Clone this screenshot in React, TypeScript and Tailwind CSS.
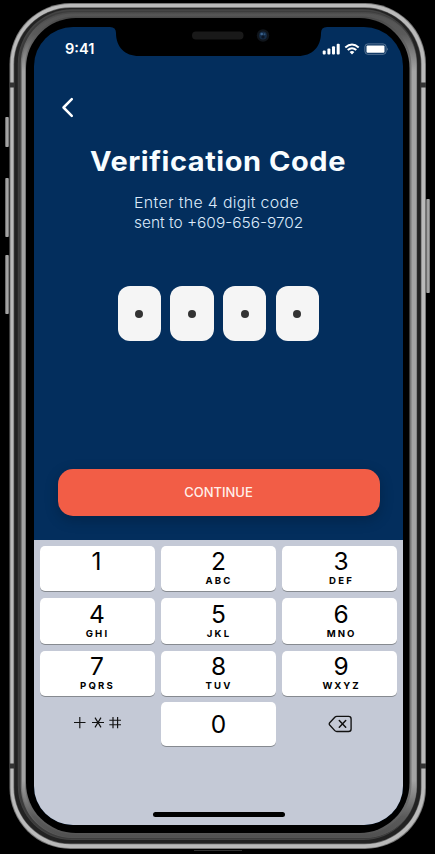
import React from "react";

const KEYS: { digit: string; letters: string; nudge: string; spacing: string }[][] = [
  [
    { digit: "1", letters: "", nudge: "pr-[2px]", spacing: "" },
    { digit: "2", letters: "ABC", nudge: "", spacing: "tracking-[2.2px]" },
    { digit: "3", letters: "DEF", nudge: "pl-[3px]", spacing: "tracking-[2.2px]" },
  ],
  [
    { digit: "4", letters: "GHI", nudge: "pr-[1px]", spacing: "tracking-[2.2px]" },
    { digit: "5", letters: "JKL", nudge: "", spacing: "tracking-[2.2px]" },
    { digit: "6", letters: "MNO", nudge: "pl-[3px]", spacing: "tracking-[1.9px]" },
  ],
  [
    { digit: "7", letters: "PQRS", nudge: "pr-[1px]", spacing: "tracking-[2.2px]" },
    { digit: "8", letters: "TUV", nudge: "", spacing: "tracking-[2.2px]" },
    { digit: "9", letters: "WXYZ", nudge: "pl-[3px]", spacing: "tracking-[1.9px]" },
  ],
];

/* Metal body of the phone with its side buttons and antenna bands. */
function DeviceBody() {
  return (
    <svg className="absolute inset-0" width="435" height="854" viewBox="0 0 435 854" aria-hidden="true">
      <defs>
        <linearGradient id="side" x1="0" x2="1" y1="0" y2="0">
          <stop offset="0" stopColor="#555" />
          <stop offset="0.5" stopColor="#bbb" />
          <stop offset="1" stopColor="#666" />
        </linearGradient>
        <linearGradient id="inner" x1="0" x2="0" y1="0" y2="1">
          <stop offset="0" stopColor="#545454" />
          <stop offset="0.025" stopColor="#5a5a5a" />
          <stop offset="0.07" stopColor="#a4a4a4" />
          <stop offset="0.93" stopColor="#a4a4a4" />
          <stop offset="0.975" stopColor="#5a5a5a" />
          <stop offset="1" stopColor="#505050" />
        </linearGradient>
        <linearGradient id="lip" x1="0" x2="0" y1="0" y2="1">
          <stop offset="0" stopColor="#484848" />
          <stop offset="0.06" stopColor="#777" />
          <stop offset="0.94" stopColor="#777" />
          <stop offset="1" stopColor="#555" />
        </linearGradient>
      </defs>
      <rect x="5" y="117" width="4" height="30" rx="1" fill="url(#side)" />
      <rect x="5" y="178" width="4" height="59" rx="1" fill="url(#side)" />
      <rect x="5" y="255" width="4" height="59" rx="1" fill="url(#side)" />
      <rect x="426" y="199" width="4" height="94" rx="1" fill="url(#side)" />
      <rect x="194" y="850" width="48" height="1" fill="#333" />
      <rect x="9.5" y="3" width="416.5" height="846" rx="61" fill="#777" />
      <rect x="10.5" y="4" width="414.5" height="844" rx="60" fill="#bababa" />
      <rect x="13.5" y="7.3" width="408" height="837" rx="57" fill="#666" />
      <rect x="14.2" y="8.1" width="406.6" height="835.4" rx="56" fill="#222" />
      <rect x="17.8" y="9.3" width="399.4" height="830.7" rx="54" fill="#444" />
      <rect x="18.6" y="11" width="398.4" height="828" rx="53" fill="#3c3c3c" />
      <rect x="20.8" y="12" width="396" height="826" rx="52" fill="url(#lip)" />
      <rect x="22" y="13.5" width="394.5" height="824" rx="51" fill="url(#inner)" />
      <rect x="25" y="16.5" width="386.5" height="818" rx="50" fill="url(#lip)" />
      <rect x="26" y="18" width="383.5" height="815" rx="50" fill="#000" />
      <rect x="9.5" y="82.5" width="4.5" height="5" fill="#333" />
      <rect x="421" y="82.5" width="5" height="5" fill="#333" />
      <rect x="9.5" y="763.5" width="4.5" height="5" fill="#333" />
      <rect x="421" y="763.5" width="5" height="5" fill="#333" />
    </svg>
  );
}

function Notch() {
  return (
    <svg className="absolute left-[110px] top-[26px]" width="217" height="31" viewBox="110 26 217 31" aria-hidden="true">
      <path d="M110 26V27Q116 27 116 33C116 47 125 56 139 56H298C312 56 321 47 321 33Q321 27 327 27V26Z" fill="#000" />
      <rect x="192" y="31.5" width="51.5" height="8" rx="4" fill="#191919" />
      <circle cx="263" cy="35.5" r="6.2" fill="#10151b" />
      <circle cx="263" cy="35.5" r="3.9" fill="#152b46" />
      <circle cx="261.7" cy="34" r="1.3" fill="#3b638d" />
      <circle cx="264.5" cy="34.2" r="1" fill="#2d5279" />
      <circle cx="263" cy="37" r="1.6" fill="#0a1524" />
    </svg>
  );
}

function StatusIcons() {
  return (
    <svg width="67" height="12" viewBox="322 42.5 67 12" aria-hidden="true">
      <g fill="#fff">
        <rect x="322.7" y="50" width="3" height="4" rx="1" />
        <rect x="327.4" y="48" width="3" height="6" rx="1" />
        <rect x="332" y="45.7" width="3" height="8.3" rx="1" />
        <rect x="336.7" y="43.2" width="3" height="10.8" rx="1" />
        <path d="M352 51L349.6 51.6L352 54L354.4 51.6Q352 49.4 349.6 51.6Z" />
        <rect x="366.5" y="45" width="18" height="7.2" rx="1" />
      </g>
      <path d="M345.3 46.9Q352 41 358.7 46.9M347.7 49.6Q352 45.9 356.3 49.6" fill="none" stroke="#fff" strokeWidth="2" />
      <rect x="364.9" y="43.4" width="21.2" height="10.4" rx="3" fill="none" stroke="#6f88a3" strokeWidth="0.8" />
      <path d="M387.2 46.9Q388.6 48.5 387.2 50.2Z" fill="#8197ae" />
    </svg>
  );
}

function SymbolsIcon() {
  return (
    <svg width="49" height="15" viewBox="73 715 49 15" fill="none" stroke="#111" strokeWidth="1.15" aria-hidden="true">
      <path d="M74 722.5H85.5M79.8 717V728.2" />
      <path d="M92 722.5H104M95 717.6L101 727.4M101 717.6L95 727.4" />
      <path d="M109.3 720.2H121M109.3 724.7H121M113 717V728.2M117.6 717V728.2" />
    </svg>
  );
}

function DeleteIcon() {
  return (
    <svg width="24" height="18" viewBox="328 715 24 18" fill="none" stroke="#111" strokeWidth="1.35" strokeLinejoin="round" strokeLinecap="round" aria-hidden="true">
      <path d="M336.8 716.4H348.6Q351.1 716.4 351.1 718.9V729Q351.1 731.5 348.6 731.5H336.8Q335.6 731.5 334.8 730.6L329.7 725Q328.8 723.9 329.7 722.8L334.8 717.2Q335.6 716.4 336.8 716.4Z" />
      <path d="M339.3 720.6L345.7 727.2M345.7 720.6L339.3 727.2" strokeWidth="1.5" />
    </svg>
  );
}

function Key({ digit, letters, nudge, spacing }: { digit: string; letters: string; nudge: string; spacing: string }) {
  return (
    <button className={`flex h-[45.5px] flex-col items-center rounded-[5px] bg-white pt-[3.5px] text-black shadow-[0_1px_0_#868a90] ${nudge}`}>
      <span className="h-[25px] text-[24.5px] leading-[25px]">{digit}</span>
      <span className={`h-[13px] pl-[1px] text-[9.6px] font-bold leading-[13px] ${spacing}`}>{letters}</span>
    </button>
  );
}

function Keypad() {
  return (
    <div className="flex flex-1 flex-col bg-[#c4c9d6] px-[6px] pt-[5.5px]">
      <div className="grid grid-cols-3 gap-x-[6px] gap-y-[7.2px]">
        {KEYS.flat().map((key) => (
          <Key key={key.digit} {...key} />
        ))}
      </div>
      <div className="mt-[5.5px] grid h-[44.5px] grid-cols-3 gap-x-[6px]">
        <button className="flex items-start justify-center pt-[13px]" aria-label="Symbols">
          <SymbolsIcon />
        </button>
        <button className="rounded-[5px] bg-white text-[24.5px] leading-[44.5px] text-black shadow-[0_1px_0_#868a90]">0</button>
        <button className="flex items-center justify-center" aria-label="Delete">
          <DeleteIcon />
        </button>
      </div>
      <div className="mt-auto mb-[8px] ml-[113px] h-[5px] w-[132px] rounded-full bg-black" />
    </div>
  );
}

export default function App() {
  return (
    <div className="relative h-[854px] w-[435px] overflow-hidden bg-black pl-[34px] pt-[27px] font-['Inter',sans-serif]">
      <DeviceBody />
      <main className="relative flex h-[798px] w-[369px] flex-col overflow-hidden rounded-[39px] bg-[#032e5d]">
        <header className="flex h-[44px] items-center justify-between pl-[31px] pr-[14px]">
          <span className="text-[14.6px] font-semibold leading-[20px] text-white">9:41</span>
          <StatusIcons />
        </header>
        <button className="ml-[27px] mt-[26px] h-[21px] w-[13px]" aria-label="Back">
          <svg width="13" height="21" viewBox="0 0 13 21" fill="none" stroke="#fff" strokeWidth="2.5" strokeLinecap="round" strokeLinejoin="round">
            <path d="M10.8 2.2L2.5 10.5L10.8 18.8" />
          </svg>
        </button>
        <h1 className="ml-[56px] mt-[27px] h-[32px] w-max origin-left scale-x-[1.09] whitespace-nowrap text-[26.6px] font-bold leading-[32px] tracking-[0.5px] text-[#f8fdff]">
          Verification Code
        </h1>
        <p className="ml-[100px] mt-[16px] whitespace-nowrap text-[15px] font-light leading-[20px] text-[#dceafa]">
          <span className="block w-max origin-left scale-x-[1.06] tracking-[0.3px]">Enter the 4 digit code</span>
          <span className="block w-max origin-left scale-x-[1.03]">sent to +609-656-9702</span>
        </p>
        <div className="ml-[83.5px] mt-[53px] flex h-[55px] gap-[9.2px]">
          {[0, 1, 2, 3].map((i) => (
            <div key={i} className="flex w-[43.5px] items-center justify-center rounded-[12px] bg-[#f5f5f5]">
              <span className="size-[8px] rounded-full bg-[#333]" />
            </div>
          ))}
        </div>
        <button className="ml-[23.5px] mt-[128px] h-[47px] w-[322px] rounded-[15px] bg-[#f25d46] text-[13px] font-medium text-[#fff0ea] shadow-[0_4px_14px_rgba(0,0,0,0.22)]">
          CONTINUE
        </button>
        <div className="h-[24px] shrink-0" />
        <Keypad />
      </main>
      <Notch />
    </div>
  );
}
